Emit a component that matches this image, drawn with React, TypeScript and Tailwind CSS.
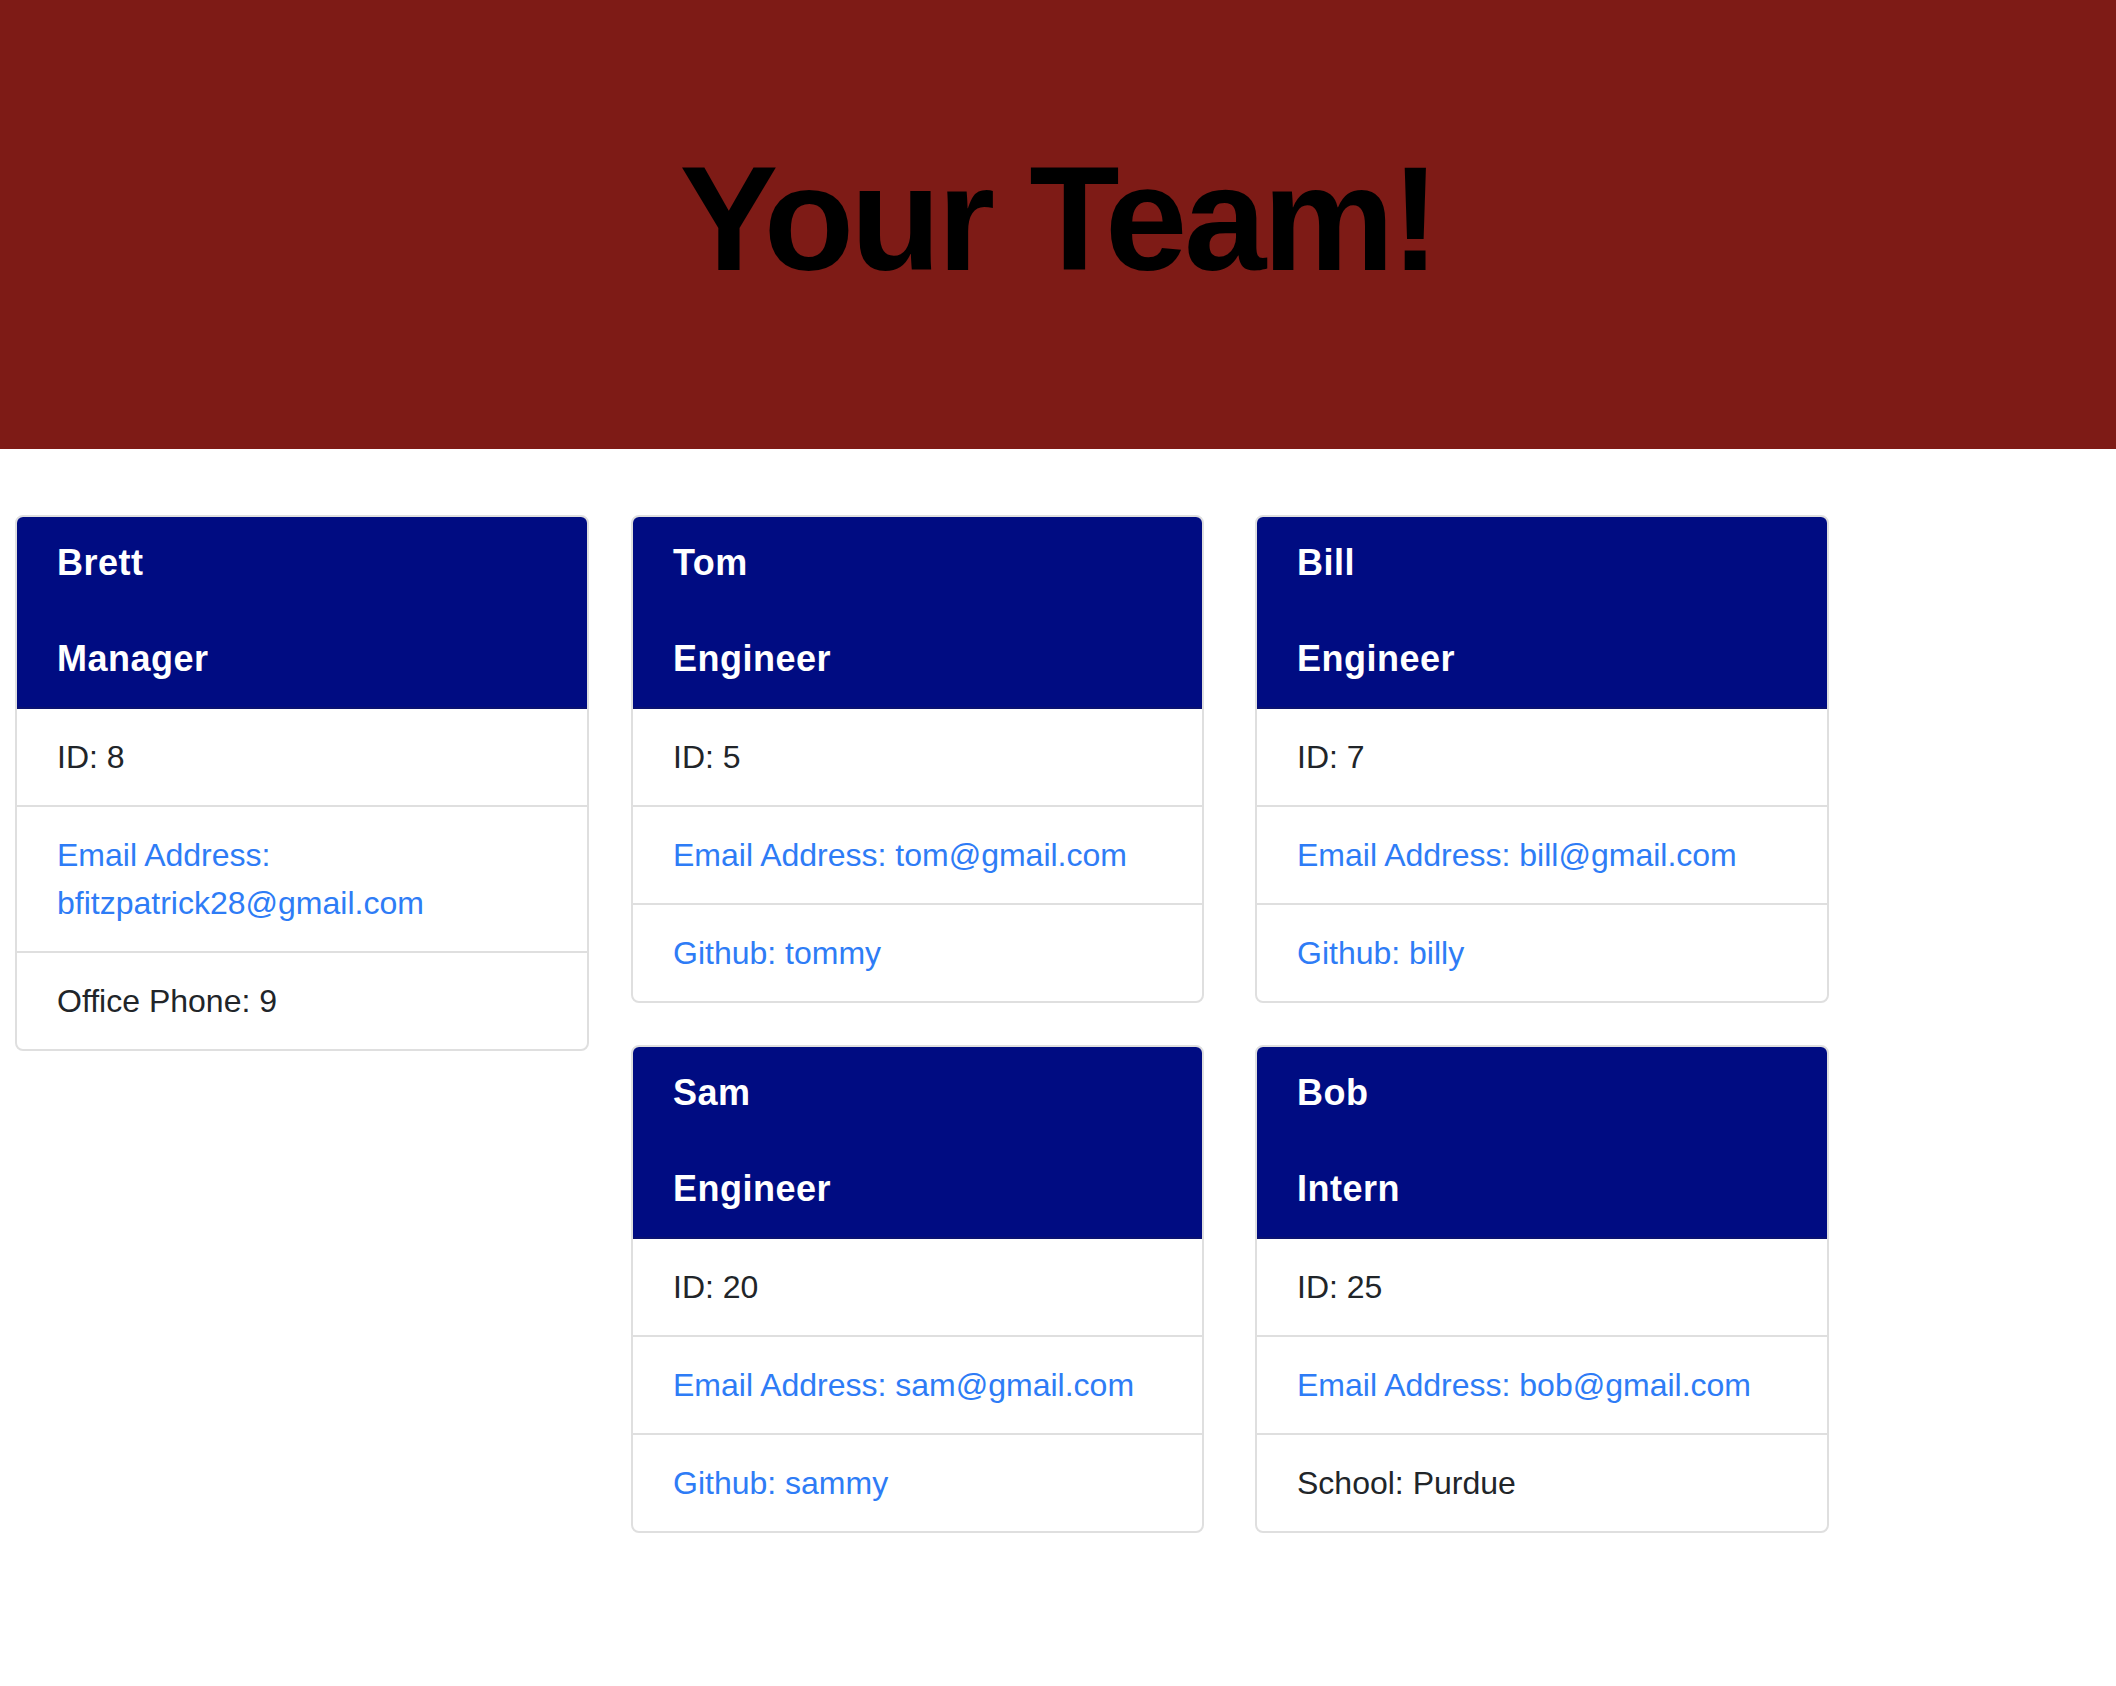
import React from 'react';

type Member = {
  name: string;
  role: string;
  id: number;
  email: string;
  extra: { label: string; value: string; link: boolean };
};

const manager: Member = {
  name: 'Brett',
  role: 'Manager',
  id: 8,
  email: 'bfitzpatrick28@gmail.com',
  extra: { label: 'Office Phone', value: '9', link: false },
};

const others: Member[] = [
  { name: 'Tom', role: 'Engineer', id: 5, email: 'tom@gmail.com', extra: { label: 'Github', value: 'tommy', link: true } },
  { name: 'Bill', role: 'Engineer', id: 7, email: 'bill@gmail.com', extra: { label: 'Github', value: 'billy', link: true } },
  { name: 'Sam', role: 'Engineer', id: 20, email: 'sam@gmail.com', extra: { label: 'Github', value: 'sammy', link: true } },
  { name: 'Bob', role: 'Intern', id: 25, email: 'bob@gmail.com', extra: { label: 'School', value: 'Purdue', link: false } },
];

const MemberCard: React.FC<{ member: Member; className?: string }> = ({ member, className = '' }) => {
  return (
    <div className={`border-2 border-[#dfdfdf] rounded-[8px] overflow-hidden bg-white ${className}`}>
      {/* Card header */}
      <div className="bg-[#000c82] border-b-2 border-[#0a1270] h-[192px] px-[40px] pt-[24px] text-white">
        <h3 className="text-[36px] leading-[1.2] font-bold tracking-[0.5px]">{member.name}</h3>
        <h3 className="mt-[53px] text-[36px] leading-[1.2] font-bold tracking-[0.5px]">{member.role}</h3>
      </div>

      {/* List items */}
      <ul className="text-[32px] leading-[48px]">
        <li className="px-[40px] py-[24px] text-[#212529]">ID: {member.id}</li>
        <li className="px-[40px] py-[24px] border-t-2 border-[#dfdfdf] text-[#2e7cf6]">
          Email Address: {member.email}
        </li>
        <li
          className={`px-[40px] py-[24px] border-t-2 border-[#dfdfdf] ${
            member.extra.link ? 'text-[#2e7cf6]' : 'text-[#212529]'
          }`}
        >
          {member.extra.label}: {member.extra.value}
        </li>
      </ul>
    </div>
  );
};

export default function App() {
  return (
    <div className="min-h-screen bg-white font-['Liberation_Sans',Arial,sans-serif]">
      {/* Jumbotron */}
      <header className="h-[449px] bg-[#7e1b16] pt-[130px] text-center">
        <h1 className="text-[148px] leading-[1.2] font-bold tracking-[-3.5px] text-black">Your Team!</h1>
      </header>

      {/* Team cards */}
      <main className="flex items-start pl-[15px] pt-[66px] pb-[80px]">
        <MemberCard member={manager} className="w-[574px] shrink-0" />
        <div className="ml-[42px] grid grid-cols-[573px_574px] gap-x-[51px] gap-y-[42px]">
          {others.map((m) => (
            <MemberCard key={m.name} member={m} />
          ))}
        </div>
      </main>
    </div>
  );
}
